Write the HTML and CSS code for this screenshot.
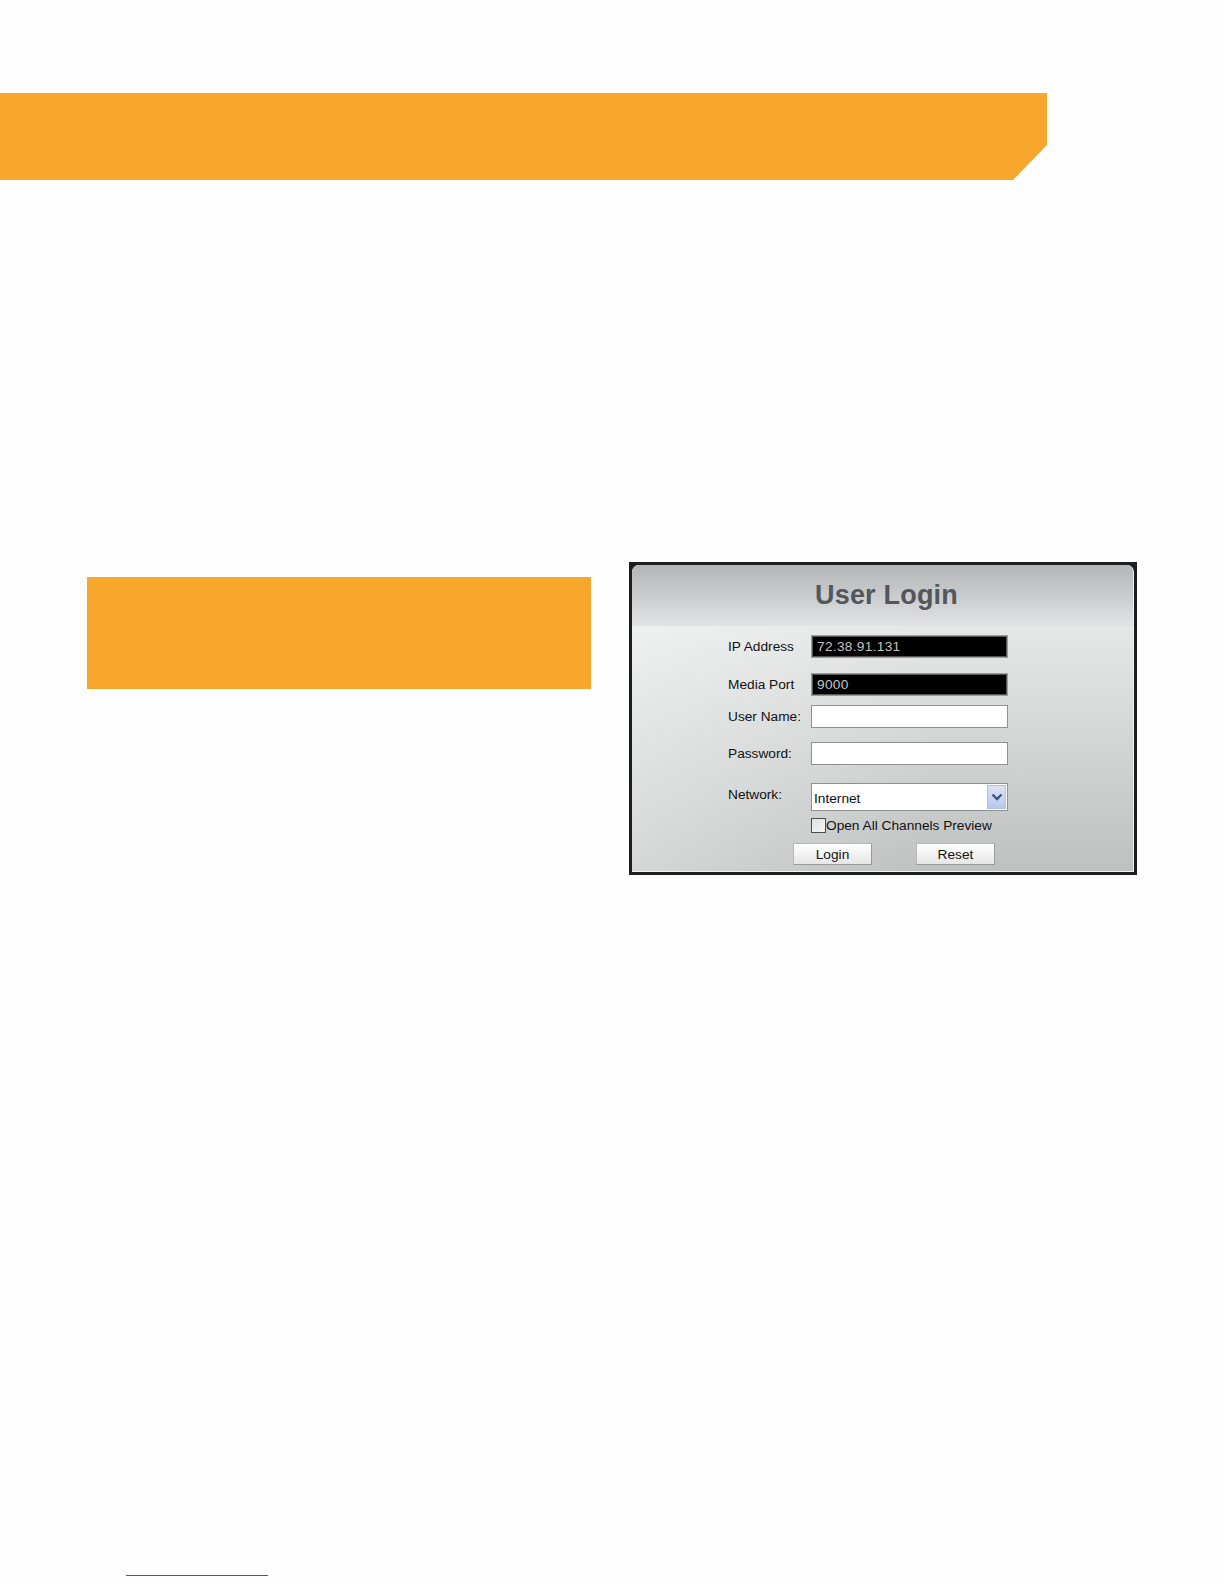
FILE: index.html
```html
<!DOCTYPE html>
<html lang="en">
<head>
<meta charset="utf-8">
<title>User Login</title>
<link rel="stylesheet" href="styles.css">
</head>
<body>
<div class="page">
  <div class="banner"></div>
  <div class="row">
    <div class="note-box"></div>
    <div class="dialog">
      <div class="panel">
        <div class="title-band"><h1 class="title">User Login</h1></div>
        <div class="form">
          <div class="field f-ip">
            <span class="label">IP Address</span>
            <div class="input dark">72.38.91.131</div>
          </div>
          <div class="field f-port">
            <span class="label">Media Port</span>
            <div class="input dark">9000</div>
          </div>
          <div class="field f-user">
            <span class="label">User Name:</span>
            <div class="input light"></div>
          </div>
          <div class="field f-pass">
            <span class="label">Password:</span>
            <div class="input light"></div>
          </div>
          <div class="field f-net">
            <span class="label net-label">Network:</span>
            <div class="select">
              <span class="select-text">Internet</span>
              <span class="select-btn">
                <svg width="12" height="8" viewBox="0 0 12 8"><path d="M1.5 1.5 L6 6 L10.5 1.5" fill="none" stroke="#3e5478" stroke-width="2.4"/></svg>
              </span>
            </div>
          </div>
          <div class="check-row">
            <span class="checkbox"></span>
            <span class="check-label">Open All Channels Preview</span>
          </div>
          <div class="buttons">
            <button class="btn">Login</button>
            <button class="btn">Reset</button>
          </div>
        </div>
      </div>
    </div>
  </div>
  <div class="foot-line"></div>
</div>
</body>
</html>
```
FILE: styles.css
```css
* { box-sizing: border-box; }
html, body { margin: 0; padding: 0; background: #fefefe; }
body { font-family: "Liberation Sans", Arial, sans-serif; }

.page { width: 1224px; height: 1584px; overflow: hidden; }

.banner {
  margin-top: 93px;
  width: 1047px;
  height: 87px;
  background: #f7a82c;
  clip-path: polygon(0 0, 100% 0, 100% 52px, 1013px 100%, 0 100%);
}

.row {
  display: flex;
  align-items: flex-start;
  margin-top: 382px;
  padding-left: 87px;
}

.note-box {
  margin-top: 15px;
  width: 504px;
  height: 112px;
  background: #f7a82c;
}

.dialog {
  margin-left: 38px;
  width: 508px;
  height: 313px;
  background: #1e1e1e;
  padding: 3px;
}

.panel {
  height: 100%;
  border-radius: 7px 7px 0 0;
  border-right: 1px solid #f2f2f2;
  border-bottom: 1px solid #f2f2f2;
  background:
    linear-gradient(to right, rgba(255,255,255,0.35), rgba(255,255,255,0) 60%),
    linear-gradient(to bottom, #f0f1f1 0%, #dcdddd 40%, #bfc1c1 100%);
  overflow: hidden;
}

.title-band {
  height: 61px;
  background: linear-gradient(to bottom, #b3b5b7 0%, #c9cbcc 50%, #e2e3e4 100%);
  display: flex;
  align-items: center;
  justify-content: center;
}

.title {
  margin: 0;
  padding-left: 8px;
  font-size: 27px;
  font-weight: bold;
  color: #53565a;
  letter-spacing: 0.2px;
}

.form {
  padding-left: 96px;
  padding-top: 9px;
  display: flex;
  flex-direction: column;
  font-size: 13.7px;
  color: #111;
}

.field { display: flex; align-items: center; }
.label { width: 83px; }
.f-port { margin-top: 15px; }
.f-user { margin-top: 9px; }
.f-pass { margin-top: 14px; }
.f-net { margin-top: 18px; align-items: flex-start; }
.net-label { padding-top: 4px; }

.input {
  width: 197px;
  height: 23px;
  border: 1px solid #8e9092;
  padding: 3px 5px;
  font-size: 13.7px;
  line-height: 15px;
}
.input.dark {
  background: #000;
  color: #c4c4c4;
  letter-spacing: 0.3px;
  border-color: #9a9c9e;
  box-shadow: inset 0 0 0 1px #555;
}
.input.light { background: #fff; height: 23px; }

.select {
  width: 197px;
  height: 28px;
  border: 1px solid #8e9092;
  background: #fff;
  display: flex;
  align-items: center;
  justify-content: space-between;
  padding-left: 2px;
}
.select-text { font-size: 13.7px; padding-top: 3px; }
.select-btn {
  width: 19px;
  height: 24px;
  margin-right: 1px;
  background: linear-gradient(to bottom, #dbe4f7, #b8c8ec);
  border: 1px solid #b0c0e0;
  display: flex;
  align-items: center;
  justify-content: center;
}

.check-row {
  margin-top: 7px;
  margin-left: 83px;
  display: flex;
  align-items: center;
  height: 15px;
}
.checkbox {
  width: 15px;
  height: 15px;
  border: 1px solid #4a4d52;
  background: linear-gradient(135deg, #dfe1e4, #f6f6f6);
}
.check-label { font-size: 13.7px; margin-left: 0; }

.buttons {
  margin-top: 10px;
  margin-left: 65px;
  display: flex;
  gap: 44px;
}
.btn {
  width: 79px;
  height: 22px;
  padding: 0;
  font-family: "Liberation Sans", Arial, sans-serif;
  font-size: 13.7px;
  color: #111;
  border: 1px solid #b8b8b8;
  border-bottom-color: #9a9a9a;
  border-right-color: #9a9a9a;
  background: linear-gradient(to bottom, #ffffff, #e6e6e6);
}

.foot-line {
  margin-top: 700px;
  margin-left: 126px;
  width: 142px;
  border-top: 1px solid #3f4fc0;
}
```
